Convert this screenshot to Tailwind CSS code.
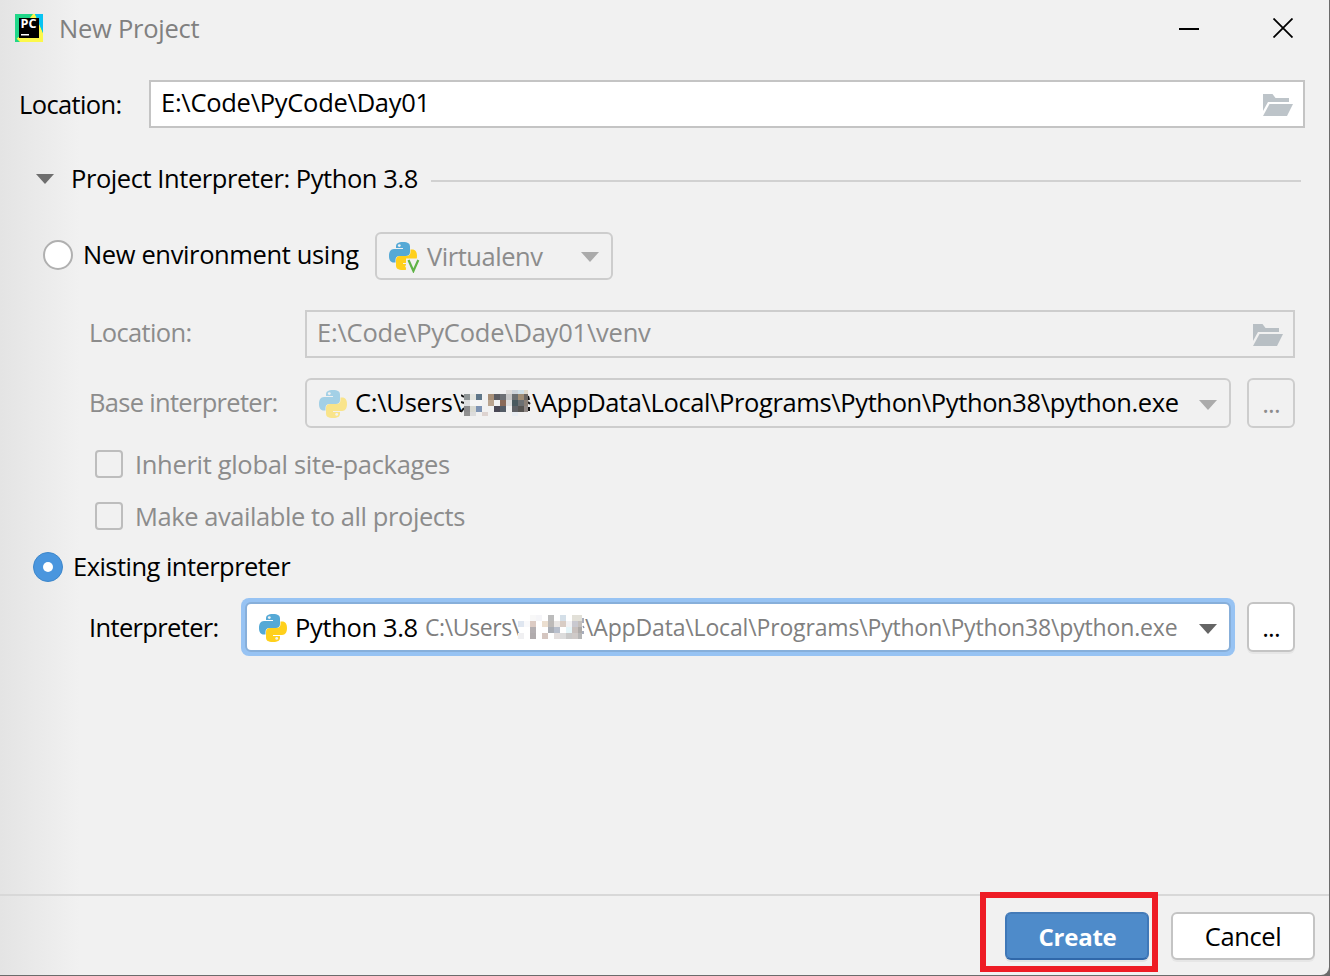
<!DOCTYPE html>
<html lang="en">
<head>
<meta charset="utf-8">
<title>New Project</title>
<script src="https://cdn.jsdelivr.net/npm/@tailwindcss/browser@4"></script>
</head>
<body class="w-[1330px] h-[976px] overflow-hidden bg-[#6b6b6b]">
<svg class="hidden">
  <symbol id="snake" viewBox="0 0 28 28">
    <path fill="var(--a)" d="M7 6V4.500C7 1.500 9 0 14 0s7 1.500 7 4.500V10c0 2.500-1.500 4-4 4h-6.500C8 14 6.500 15.500 6.500 18v2.500H5C1.500 20.500 0 18 0 14s1.500-7 5-7h9V6z"/>
    <circle cx="10.300" cy="3.600" r="1.400" fill="#f1f1f1"/>
    <path fill="var(--b)" d="M21 22v1.500c0 3-2 4.500-7 4.500s-7-1.500-7-4.500V18c0-2.500 1.500-4 4-4h6.500c2.500 0 4-1.500 4-4V7.500H23c3.500 0 5 2.500 5 6.500s-1.500 7-5 7h-9v1z"/>
    <circle cx="17.700" cy="24.400" r="1.400" fill="#f1f1f1"/>
  </symbol>
  <symbol id="folder" viewBox="0 0 30 22"><path d="M0 0h9.500l3 4H26v4H5L0 17z"/><path d="M6.500 10H30l-6 12H0z"/></symbol>
</svg>
<main class="relative w-[1329px] h-[975px] flex flex-col rounded-br-lg bg-[#f1f1f1] bg-linear-to-r from-[#e4e4e4] to-[#f1f1f1] to-[80px] font-['Open_Sans',sans-serif] text-[25.5px] leading-9 text-black whitespace-nowrap">
  <header class="h-14 flex items-center pl-[15px] pr-[36px]">
    <svg class="w-7 h-7" viewBox="0 0 28 28"><path fill="#21d789" d="M0 0h28v28H0z"/><path fill="#fcf84a" d="M15 4l3-4h2l8 19v9H5l-5-5z"/><path fill="#21d789" d="M0 8h5v14l-5 4z"/><path fill="#07c3f2" d="M20 0h8v19z"/><path d="M4 4h20v20H4z"/><path fill="#fff" d="M6 20h8v1.500H6z"/><text x="5.500" y="14.300" font-size="11.500" font-weight="700" fill="#fff" textLength="16" lengthAdjust="spacingAndGlyphs">PC</text></svg>
    <span class="ml-4 text-[#808080] tracking-[-0.25px]">New Project</span>
    <svg class="ml-auto w-5 h-5" viewBox="0 0 20 20"><path fill="#000" d="M0 10h20v2H0z"/></svg>
    <svg class="ml-[74px] w-5 h-5" viewBox="0 0 20 20"><path stroke="#000" stroke-width="1.800" d="M.5.500l19 19M19.500.500l-19 19"/></svg>
  </header>
  <div class="mt-6 h-12 flex items-center pl-[19px]">
    <label class="w-[130px] tracking-[-0.62px]">Location:</label>
    <div class="w-[1156px] h-12 flex items-center border-2 border-[#c4c4c4] bg-white px-[10px]">
      <span class="pb-1 tracking-[-0.27px]">E:\Code\PyCode\Day01</span>
      <svg class="ml-auto mt-0.5 w-[30px] h-[22px] fill-[#bdc4c9]"><use href="#folder"/></svg>
    </div>
  </div>
  <div class="mt-8 h-10 flex items-center pl-9">
    <svg class="mb-0.5 w-[18px] h-[10px]" viewBox="0 0 18 10"><path fill="#6e6e6e" d="M0 0h18L9 10z"/></svg>
    <span class="ml-[17px] w-[360px] pb-1 tracking-[-0.43px]">Project Interpreter: Python 3.8</span>
    <div class="mt-0.5 w-[870px] h-0.5 bg-[#d1d1d1]"></div>
  </div>
  <div class="mt-8 h-12 flex items-center pl-[43px]">
    <div class="w-[30px] h-[30px] mb-0.5 rounded-full border-2 border-[#b0b0b0] bg-white"></div>
    <span class="ml-[10px] w-[292px] pb-1 tracking-[-0.37px]">New environment using</span>
    <div class="w-[238px] h-12 flex items-center rounded-md border-2 border-[#cdcdcd] px-3">
      <svg class="mt-[3px] w-[31px] h-[31px] [--a:#55a9d6] [--b:#ffd01c]" viewBox="0 0 31 31"><use href="#snake" width="28" height="28"/><path fill="#f1f1f1" d="M17 16.500h14V31H17z"/><path fill="none" stroke="#5fb346" stroke-width="2.200" d="M19.500 18l4.900 11 4.900-11"/></svg>
      <span class="ml-[7px] text-[#8c8c8c] tracking-[-0.45px]">Virtualenv</span>
      <svg class="ml-auto mt-0.5 w-[18px] h-[10px]" viewBox="0 0 18 10"><path fill="#ababab" d="M0 0h18L9 10z"/></svg>
    </div>
  </div>
  <div class="mt-[30px] h-12 flex items-center pl-[89px]">
    <label class="w-[216px] pb-1 text-[#8c8c8c] tracking-[-0.62px]">Location:</label>
    <div class="w-[990px] h-12 flex items-center border-2 border-[#cdcdcd] px-[10px] text-[#8c8c8c]">
      <span class="pb-1 tracking-[-0.22px]">E:\Code\PyCode\Day01\venv</span>
      <svg class="ml-auto mt-0.5 w-[30px] h-[22px] fill-[#b8bfc4]"><use href="#folder"/></svg>
    </div>
  </div>
  <div class="mt-5 h-[50px] flex items-center pl-[89px]">
    <label class="w-[216px] pb-0.5 text-[#8c8c8c] tracking-[-0.7px]">Base interpreter:</label>
    <div class="w-[926px] h-[50px] flex items-center rounded-md border-2 border-[#cdcdcd] px-3">
      <svg class="mt-0.5 w-7 h-7 [--a:#a3d0e6] [--b:#f9e48a]"><use href="#snake"/></svg>
      <span class="ml-2 w-[106px] pb-0.5 tracking-[-0.25px]">C:\Users\</span>
      <svg id="mosaic-dark" class="w-[71px] h-[27px]" viewBox="0 0 71 27" shape-rendering="crispEdges"></svg>
      <span class="pb-0.5 tracking-[-0.38px]">\AppData\Local\Programs\Python\Python38\python.exe</span>
      <svg class="ml-auto mt-1 w-[18px] h-[10px]" viewBox="0 0 18 10"><path fill="#ababab" d="M0 0h18L9 10z"/></svg>
    </div>
    <div class="ml-4 w-12 h-[50px] flex justify-center items-center rounded-md border-2 border-[#cdcdcd] text-[#8c8c8c] tracking-[-0.8px]">...</div>
  </div>
  <div class="mt-[22px] h-7 flex items-center pl-[95px] text-[#8c8c8c]">
    <span class="w-7 h-7 rounded border-2 border-[#bdbdbd]"></span><span class="ml-3 tracking-[-0.32px]">Inherit global site-packages</span>
  </div>
  <div class="mt-6 h-7 flex items-center pl-[95px] text-[#8c8c8c]">
    <span class="w-7 h-7 rounded border-2 border-[#bdbdbd]"></span><span class="ml-3 tracking-[-0.43px]">Make available to all projects</span>
  </div>
  <div class="mt-[22px] h-[30px] flex items-center pl-[33px]">
    <span class="w-[30px] h-[30px] flex items-center justify-center rounded-full border border-[#3d87cb] bg-[#4a96de]"><span class="w-2.5 h-2.5 rounded-full bg-white"></span></span>
    <span class="ml-[10px] pb-0.5 tracking-[-0.54px]">Existing interpreter</span>
  </div>
  <div class="mt-4 h-[58px] flex items-center pl-[89px]">
    <label class="w-[152px] tracking-[-0.65px]">Interpreter:</label>
    <div class="w-[994px] h-[58px] rounded-lg bg-[#97c3f3] p-1">
      <div class="w-full h-full flex items-center rounded-md border-2 border-[#87afda] bg-white px-3">
        <svg class="mt-0.5 w-7 h-7 [--a:#55a9d6] [--b:#ffd01c]"><use href="#snake"/></svg>
        <span class="ml-2 w-[130px] tracking-[-0.35px]">Python 3.8</span>
        <span class="w-[93px] text-[23px] text-[#808080] tracking-[-0.4px]">C:\Users\</span>
        <svg id="mosaic-light" class="w-[67px] h-6" viewBox="0 0 67 24" shape-rendering="crispEdges"></svg>
        <span class="text-[23px] text-[#808080] tracking-[-0.16px]">\AppData\Local\Programs\Python\Python38\python.exe</span>
        <svg class="ml-auto mt-1 w-[18px] h-[10px]" viewBox="0 0 18 10"><path fill="#656565" d="M0 0h18L9 10z"/></svg>
      </div>
    </div>
    <div class="ml-3 w-12 h-[50px] flex justify-center items-center rounded-md border-2 border-[#c4c4c4] bg-white tracking-[-0.8px] shadow-[0_2px_0_#e6e6e6]">...</div>
  </div>
  <footer class="mt-auto h-[81px] flex items-start border-t-2 border-[#d8d8d8] pt-4 pl-[1005px]">
    <button class="w-36 h-12 flex items-center justify-center rounded-md border-2 border-t-[#447bb8] border-x-[#3f78b8] border-b-[#3068aa] bg-[#4e8bca] pt-0.5 pl-px text-[24px] font-bold text-white tracking-[-0.25px] shadow-[0_2px_0_#e2e2e2]">Create</button>
    <button class="ml-[22px] w-36 h-12 flex items-center justify-center rounded-md border-2 border-[#c4c4c4] bg-white tracking-[-0.4px] shadow-[0_2px_0_#e6e6e6]">Cancel</button>
  </footer>
  <div class="absolute left-[980px] top-[892px] w-[178px] h-20 border-6 border-[#ee1c25]"></div>
</main>
<script>
// Pixelated user names: one list per row, one colour per 6px cell, null = empty.
const n = null;
function mosaic(id, x0, rows, heights, strokes) {
  let y = 0, out = strokes;
  rows.forEach((row, r) => {
    row.forEach((c, i) => { if (c) out += `<rect x="${x0 + i * 6}" y="${y}" width="${i === 10 ? 4 : 6}" height="${heights[r]}" fill="#${c}"/>`; });
    y += heights[r];
  });
  document.getElementById(id).innerHTML = out;
}
mosaic('mosaic-dark', 3, [
  [n,n,n,n,n,n,n,'dedcda','ccd3d9','cfe0e8','e0dacb'],
  ['8f9596','e4e5df','5f7688',n,'a89078','5d5d62','6d7074','c6c6c6','6a6e70','a08d74','6b6763'],
  ['dddfe0','f5f5f5','f5f5f5',n,'b9a48f','f1f1f1','8a6a58','dedede','4a5a5f','6d7072','8a7f75'],
  ['8b8b8d','d8d9d2','7d93b3',n,n,'4a4855','545c66',n,'5f6064','575552','8f8784'],
  ['909090','dcdcdc',n,'ddd3d0',n,n,n,n,'e8edf2',n,n]
], [4,6,6,6,4], '<path shape-rendering="auto" fill="none" stroke="#111" stroke-width="2" d="M0 5l3 2M0 12l3 1M0 22l3-4M67 6l1 4M67 12l2 2M68 17v4"/>');
mosaic('mosaic-light', 0, [
  [n,n,'f8f8f8','f5f5f8',n,'bcbcbc',n,'d4dfe8',n,'e2e0d8','e2e0d8'],
  ['dfe6f0','f9f9fb','dccbc3',n,'ecdfd0','bdbab8','e9e6e4','d8ccc4','f2f2f4','c9c9d0','c4bfbc'],
  [n,n,'b3aeb0',n,n,'a9adb4','b8bfcc',n,'e4f4f8','c8c0bd','adaaa8'],
  ['f0f0f2',n,'b0abac',n,'d5c6c0',n,'e3dedd','dcdcdc','c9c9c9','cfcac8','b6b6b6']
], [6,6,6,6], '<path shape-rendering="auto" fill="none" stroke="#8c94a8" stroke-width="1.500" d="M65 3v5M65 11l1 2M65 16v3"/>');
</script>
</body>
</html>
